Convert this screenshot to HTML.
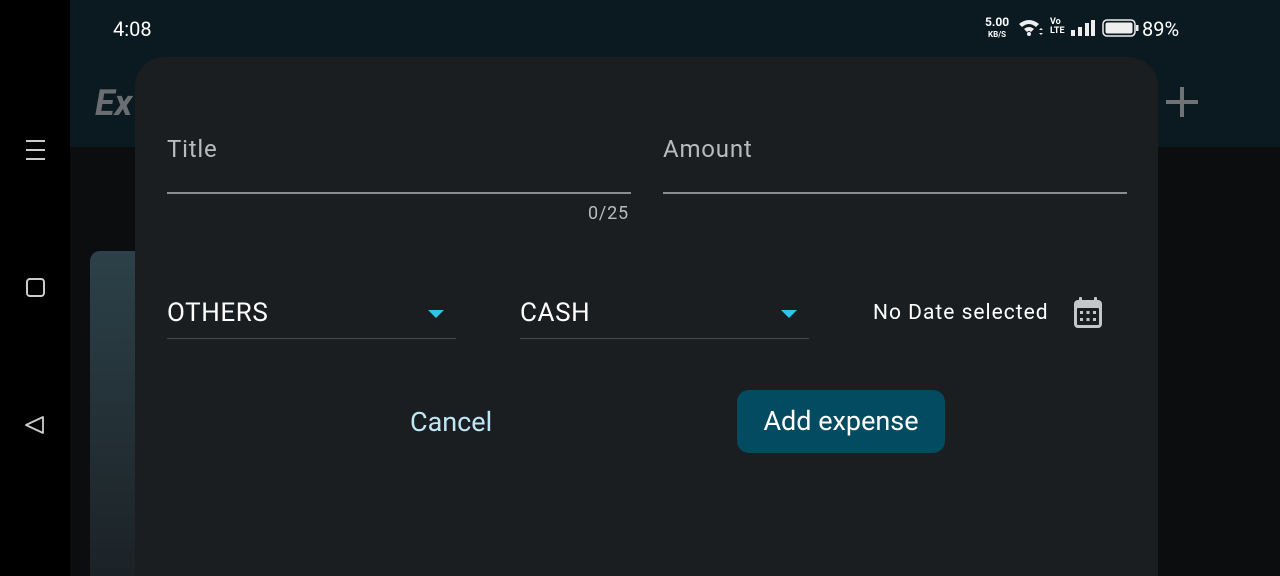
<!DOCTYPE html>
<html style="width:1280px;height:576px;overflow:hidden"><head><meta charset="utf-8"><style>
*{margin:0;padding:0;box-sizing:border-box}
body{width:1280px;height:576px;overflow:hidden;background:#0c0d0f;font-family:"Roboto","Liberation Sans",sans-serif;position:relative}
.abs{position:absolute}
.nav{left:0;top:0;width:70px;height:576px;background:#000}
.hdr{left:70px;top:0;width:1210px;height:147px;background:#0a1a20}
.card{left:90px;top:251px;width:100px;height:325px;border-radius:10px 10px 0 0;background:linear-gradient(#2c4149,#1b2226)}
.dlg{left:135px;top:57px;width:1023px;height:519px;border-radius:30px 30px 0 0;background:#1b1e20}
.t{color:#fff}
.lbl{color:#b9bcbf;font-size:24px;letter-spacing:.8px}
.line{height:2px;background:#8a8d90}
.dd{color:#fff;font-size:26px;letter-spacing:.6px}
.uline{height:1px;background:#45484b}
.tri{width:0;height:0;border-left:8px solid transparent;border-right:8px solid transparent;border-top:8px solid #2fc4ea}
</style></head><body>
<div class="abs nav"></div>
<div class="abs hdr"></div>
<div class="abs t" style="left:113px;top:17px;font-size:20px">4:08</div>
<div class="abs" style="left:95px;top:82px;font-size:36px;font-weight:bold;font-style:italic;color:#6b6e70">Ex</div>
<div class="abs" style="left:1166px;top:100px;width:32px;height:4px;background:#6f7375"></div>
<div class="abs" style="left:1180px;top:87px;width:4px;height:30px;background:#6f7375"></div>
<div class="abs t" style="left:985px;top:17px;font-size:12px;font-weight:bold;line-height:11px;text-align:center">5.00<br><span style="font-size:8px">KB/S</span></div>
<svg class="abs" style="left:1018px;top:18px" width="26" height="20" viewBox="0 0 26 20"><path d="M1 6 Q11-2 21 6 L18 9 Q11 3 4 9Z M6 11 Q11 7 16 11 L13 14 Q11 12 9 14Z" fill="#eee"/><circle cx="11" cy="16" r="2" fill="#eee"/><path d="M21 12l2-2 2 2zM21 15l2 2 2-2z" fill="#eee"/></svg>
<div class="abs t" style="left:1050px;top:18px;font-size:9px;font-weight:bold;line-height:9px">Vo<br>LTE</div>
<svg class="abs" style="left:1070px;top:19px" width="26" height="18"><rect x="1" y="11" width="4" height="6" fill="#eee"/><rect x="8" y="8" width="4" height="9" fill="#eee"/><rect x="15" y="4" width="4" height="13" fill="#eee"/><rect x="21" y="1" width="4" height="16" fill="#eee"/></svg>
<svg class="abs" style="left:1102px;top:19px" width="38" height="18"><rect x="1" y="1" width="32" height="16" rx="4" fill="none" stroke="#eee" stroke-width="1.5"/><rect x="3.5" y="3.5" width="27" height="11" rx="2" fill="#eee"/><rect x="34" y="6" width="2.5" height="6" fill="#eee"/></svg>
<div class="abs t" style="left:1142px;top:17px;font-size:20px">89%</div>
<div class="abs" style="left:26px;top:140px;width:19px;height:2px;background:#ccc;box-shadow:0 9px 0 #ccc,0 18px 0 #ccc"></div>
<div class="abs" style="left:26px;top:278px;width:19px;height:19px;border:2px solid #ccc;border-radius:4px"></div>
<svg class="abs" style="left:24px;top:414px" width="22" height="22"><path d="M2 11 L19 3 L19 19Z" fill="none" stroke="#ccc" stroke-width="1.8" stroke-linejoin="round"/></svg>
<div class="abs card"></div>
<div class="abs dlg"></div>
<div class="abs lbl" style="left:167px;top:135px">Title</div>
<div class="abs line" style="left:167px;top:192px;width:464px"></div>
<div class="abs" style="left:588px;top:203px;font-size:18px;color:#b9bcbf;letter-spacing:.8px">0/25</div>
<div class="abs lbl" style="left:663px;top:135px">Amount</div>
<div class="abs line" style="left:663px;top:192px;width:464px"></div>
<div class="abs dd" style="left:167px;top:298px">OTHERS</div>
<div class="abs tri" style="left:428px;top:310px"></div>
<div class="abs uline" style="left:167px;top:338px;width:289px"></div>
<div class="abs dd" style="left:520px;top:298px">CASH</div>
<div class="abs tri" style="left:781px;top:310px"></div>
<div class="abs uline" style="left:520px;top:338px;width:289px"></div>
<div class="abs t" style="left:873px;top:301px;font-size:21px;letter-spacing:1px">No Date selected</div>
<svg class="abs" style="left:1072px;top:296px" width="32" height="34"><rect x="2" y="4" width="28" height="28" rx="4" fill="#c4c7ca"/><rect x="7" y="1" width="3" height="6" rx="1" fill="#c4c7ca"/><rect x="22" y="1" width="3" height="6" rx="1" fill="#c4c7ca"/><rect x="5" y="12" width="22" height="17" rx="1" fill="#1b1e20"/><g fill="#c4c7ca"><rect x="8" y="15" width="3" height="3"/><rect x="14.5" y="15" width="3" height="3"/><rect x="21" y="15" width="3" height="3"/><rect x="8" y="22" width="3" height="3"/><rect x="14.5" y="22" width="3" height="3"/><rect x="21" y="22" width="3" height="3"/></g></svg>
<div class="abs" style="left:410px;top:406px;font-size:27px;color:#bfe6f7">Cancel</div>
<div class="abs" style="left:737px;top:390px;width:208px;height:63px;border-radius:12px;background:#034b60;color:#fff;font-size:27px;text-align:center;line-height:63px">Add expense</div>
</body></html>
